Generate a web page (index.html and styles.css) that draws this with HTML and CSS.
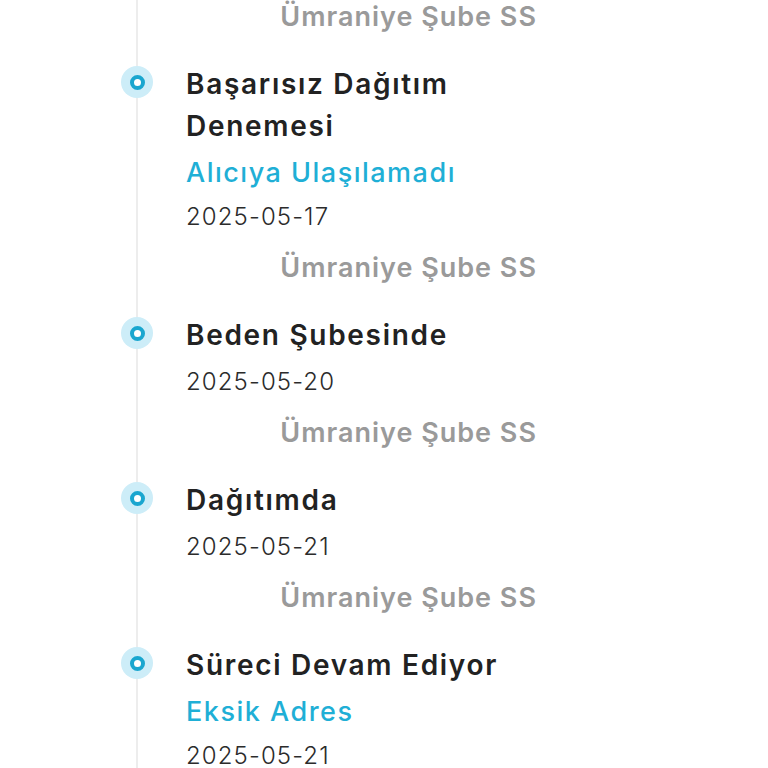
FILE: index.html
```html
<!DOCTYPE html>
<html lang="tr">
<head>
<meta charset="utf-8">
<title>Kargo Takip</title>
<link rel="stylesheet" href="styles.css">
</head>
<body>
<div class="timeline">
  <div class="item partial">
    <div class="dot-col"></div>
    <div class="content">
      <div class="location">Ümraniye Şube SS</div>
    </div>
  </div>
  <div class="item">
    <div class="dot-col"><span class="dot"></span></div>
    <div class="content">
      <div class="title">Başarısız Dağıtım Denemesi</div>
      <div class="reason">Alıcıya Ulaşılamadı</div>
      <div class="date">2025-05-17</div>
      <div class="location">Ümraniye Şube SS</div>
    </div>
  </div>
  <div class="item">
    <div class="dot-col"><span class="dot"></span></div>
    <div class="content">
      <div class="title">Beden Şubesinde</div>
      <div class="date">2025-05-20</div>
      <div class="location">Ümraniye Şube SS</div>
    </div>
  </div>
  <div class="item">
    <div class="dot-col"><span class="dot"></span></div>
    <div class="content">
      <div class="title">Dağıtımda</div>
      <div class="date">2025-05-21</div>
      <div class="location">Ümraniye Şube SS</div>
    </div>
  </div>
  <div class="item">
    <div class="dot-col"><span class="dot"></span></div>
    <div class="content">
      <div class="title">Süreci Devam Ediyor</div>
      <div class="reason">Eksik Adres</div>
      <div class="date">2025-05-21</div>
    </div>
  </div>
</div>
</body>
</html>
```
FILE: styles.css
```css
html, body {
  margin: 0;
  padding: 0;
  background: #ffffff;
}
body {
  font-family: Inter, "Noto Sans", sans-serif;
  overflow: hidden;
  height: 768px;
}
.timeline {
  margin-left: 136px;
  margin-top: -1px;
  border-left: 2px solid #ededed;
  min-height: 800px;
  display: flex;
  flex-direction: column;
  gap: 28px;
}
.item {
  display: flex;
  gap: 33px;
}
.dot-col {
  width: 32px;
  margin-left: -17px;
  flex: none;
}
.dot {
  display: block;
  width: 32px;
  height: 32px;
  margin-top: 3px;
  border-radius: 50%;
  background: #cdedf8;
  position: relative;
}
.dot::after {
  content: "";
  position: absolute;
  left: 8.5px;
  top: 8.5px;
  width: 7px;
  height: 7px;
  border: 4px solid #1aa6cf;
  border-radius: 50%;
  background: #ffffff;
}
.content {
  width: 351px;
  display: flex;
  flex-direction: column;
}
.title {
  font-size: 28px;
  line-height: 42px;
  font-weight: 600;
  color: #222222;
  letter-spacing: 1.7px;
}
.reason {
  font-size: 27px;
  line-height: 36px;
  margin-top: 8px;
  font-weight: 500;
  color: #1fafd6;
  letter-spacing: 1.5px;
}
.date {
  font-size: 24px;
  line-height: 36px;
  margin-top: 8px;
  font-weight: 300;
  color: #2b2b2b;
  letter-spacing: 1.1px;
}
.location {
  font-size: 27px;
  line-height: 36px;
  margin-top: 15px;
  font-weight: 600;
  color: #9a9a9a;
  text-align: right;
  letter-spacing: 1px;
}
.partial .location {
  margin-top: 0;
}
```
